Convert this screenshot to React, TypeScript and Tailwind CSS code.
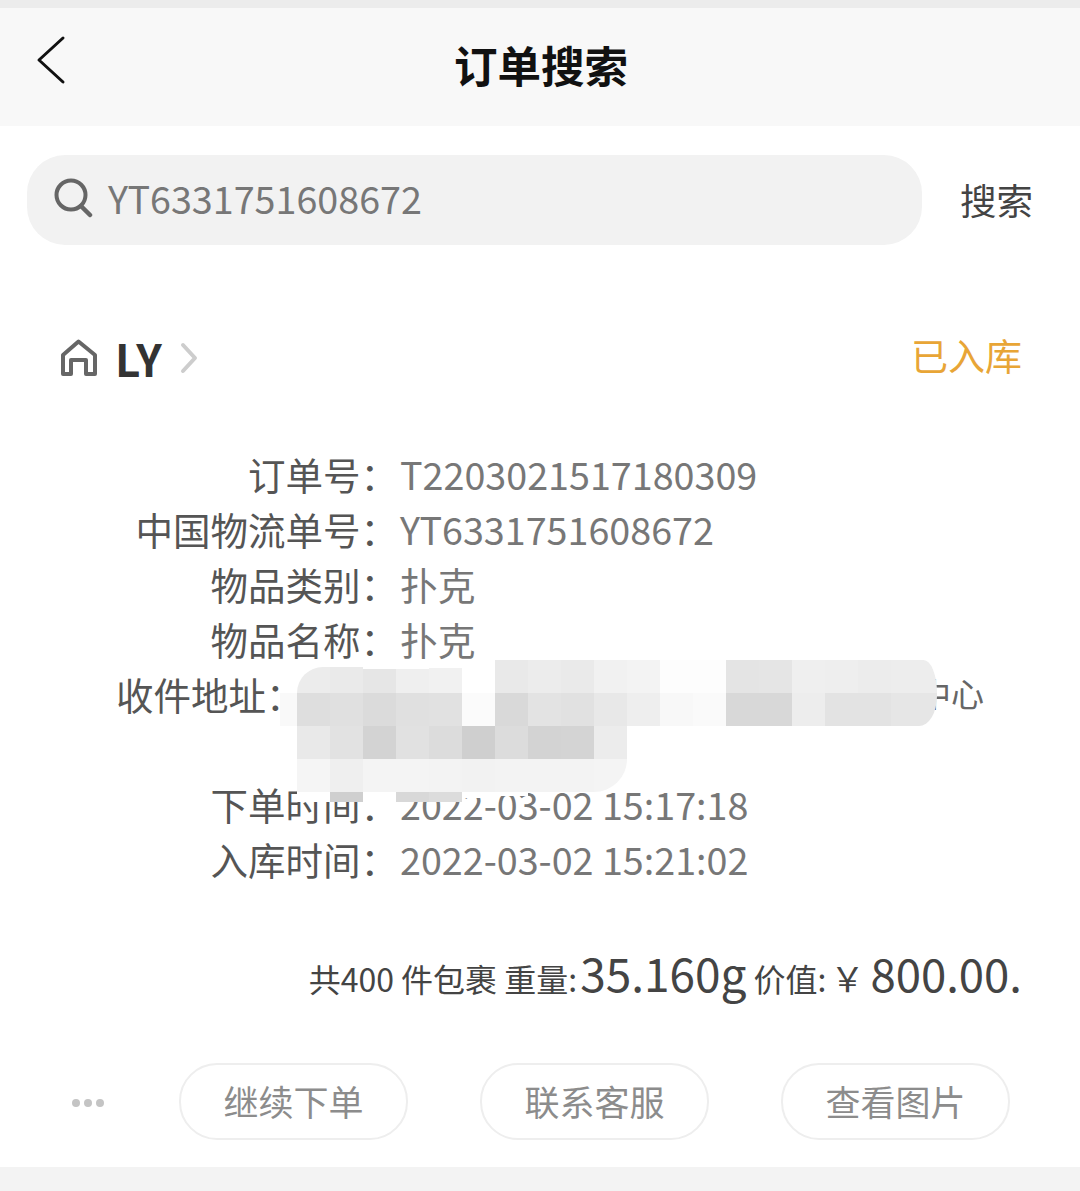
const labelRows = [
  { label: "订单号：", value: "T2203021517180309" },
  { label: "中国物流单号：", value: "YT6331751608672" },
  { label: "物品类别：", value: "扑克" },
  { label: "物品名称：", value: "扑克" },
];

const timeRows = [
  { label: "下单时间：", value: "2022-03-02 15:17:18" },
  { label: "入库时间：", value: "2022-03-02 15:21:02" },
];

// the blurred out part of the address, row by row, first track is the faint left edge
const mosaicTiles = [
  "",
  "bg-[#ececec] mt-[7px] rounded-tl-[30px]",
  "bg-[#eaeaea] mt-[7px]",
  "bg-[#e6e6e6] mt-[9px]",
  "bg-[#efefef] mt-[9px]",
  "bg-[#f1f1f1] mt-[8px]",
  "",
  "bg-[#e9e9e9]",
  "bg-[#ececec]",
  "bg-[#eaeaea]",
  "bg-[#f1f1f1]",
  "bg-[#f3f3f3]",
  "bg-[#fdfdfd]",
  "bg-[#fdfdfd]",
  "bg-[#e4e4e4]",
  "bg-[#e5e5e5]",
  "bg-[#efefef]",
  "bg-[#eeeeee]",
  "bg-[#ececec]",
  "bg-[#ededed] rounded-tr-[18px_44px]",

  "bg-[#f9f9f9]",
  "bg-[#dedede]",
  "bg-[#e0e0e0]",
  "bg-[#dbdbdb]",
  "bg-[#e0e0e0]",
  "bg-[#e1e1e1]",
  "bg-[#fbfbfb]",
  "bg-[#d9d9d9]",
  "bg-[#e3e3e3]",
  "bg-[#e1e1e1]",
  "bg-[#e8e8e8]",
  "bg-[#eeeeee]",
  "bg-[#f8f8f8]",
  "bg-[#fafafa]",
  "bg-[#d8d8d8]",
  "bg-[#d8d8d8]",
  "bg-[#ededed]",
  "bg-[#e3e3e3]",
  "bg-[#e3e3e3]",
  "bg-[#e6e6e6] rounded-br-[18px_30px]",

  "",
  "bg-[#e9e9e9]",
  "bg-[#e2e2e2]",
  "bg-[#d3d3d3]",
  "bg-[#e1e1e1]",
  "bg-[#dcdcdc]",
  "bg-[#cfcfcf]",
  "bg-[#dcdcdc]",
  "bg-[#d3d3d3]",
  "bg-[#d4d4d4]",
  "bg-[#ececec]",
  "", "", "", "", "", "", "", "", "",

  "",
  "bg-[#f5f5f5]",
  "bg-[#efefef]",
  "bg-[#f4f4f4]",
  "bg-[#f4f4f4]",
  "bg-[#f3f3f3]",
  "bg-[#f2f2f2]",
  "bg-[#f3f3f3]",
  "bg-[#f3f3f3]",
  "bg-[#f3f3f3]",
  "bg-[#f4f4f4] rounded-br-[40px]",
  "", "", "", "", "", "", "", "", "",

  "",
  "bg-white",
  "bg-[#cfcfcf]",
  "bg-white",
  "bg-[#d8d8d8]",
  "bg-[#dcdcdc]",
  "bg-white mb-[4px]",
  "bg-white mb-[6px]",
  "", "", "", "", "", "", "", "", "", "", "", "",
];

const actions = ["继续下单", "联系客服", "查看图片"];

export default function App() {
  return (
    <div className="relative flex h-[1191px] w-[1080px] flex-col overflow-hidden bg-white font-['Noto_Sans_CJK_SC','Noto_Sans',sans-serif]">
      <header className="flex h-[126px] shrink-0 items-center border-t-8 border-[#ececec] bg-[#f8f8f8]">
        <svg width="36" height="50" viewBox="0 0 36 50" fill="none" className="-mt-[14px] ml-[34px]">
          <path d="M29 3 L5 25 L29 47" stroke="#111" strokeWidth="3" strokeLinecap="round" strokeLinejoin="round" />
        </svg>
        <h1 className="mb-[4px] ml-[384px] text-[43.5px] leading-none font-bold text-[#111]">订单搜索</h1>
      </header>

      <div className="mt-[29px] flex items-center pl-[27px]">
        <div className="flex h-[90px] w-[895px] items-center rounded-[38px] bg-[#f2f2f2] pl-[27px]">
          <svg width="40" height="40" viewBox="0 0 40 40" fill="none" className="-mt-[4px]">
            <circle cx="17" cy="17" r="14.5" stroke="#666" strokeWidth="4" />
            <path d="M27 28 L36 37" stroke="#666" strokeWidth="4.5" strokeLinecap="round" />
          </svg>
          <span className="mb-[4px] ml-[14px] text-[37.7px] leading-none text-[#777]">YT6331751608672</span>
        </div>
        <span className="ml-[38px] text-[36.5px] leading-none text-[#444]">搜索</span>
      </div>

      <div className="mt-[83px] flex h-[60px] items-center justify-between pr-[58px] pl-[60px]">
        <div className="flex items-center">
          <svg width="38" height="38" viewBox="0 0 38 38" fill="none">
            <path
              d="M3 35 V16 L18.5 2.5 L35 16 V35 H26 V21 H11 V35 Z"
              stroke="#666"
              strokeWidth="4"
              strokeLinejoin="round"
            />
          </svg>
          <span className="ml-[17px] text-[44px] leading-none font-bold text-[#333]">LY</span>
          <svg width="20" height="32" viewBox="0 0 20 32" fill="none" className="ml-[17px]">
            <path d="M4 3 L16 16 L4 29" stroke="#cdcdcd" strokeWidth="4" strokeLinecap="round" strokeLinejoin="round" />
          </svg>
        </div>
        <span className="mb-[6px] text-[37px] leading-none text-[#e8a536]">已入库</span>
      </div>

      <div className="mt-[58px] flex flex-col text-[37.5px] leading-[55px]">
        {labelRows.map((row) => (
          <div key={row.label} className="grid h-[55px] grid-cols-[398px_1fr]">
            <span className="text-right whitespace-nowrap text-[#555]">{row.label}</span>
            <span className="pl-[2px] text-[37.7px] text-[#777]">{row.value}</span>
          </div>
        ))}
        <div className="flex h-[110px] pr-[96px] pl-[116px]">
          <span className="whitespace-nowrap text-[#555]">收件地址：</span>
          <span className="ml-auto text-[33px] text-[#666]">中心</span>
        </div>
        {timeRows.map((row) => (
          <div key={row.label} className="grid h-[55px] grid-cols-[398px_1fr]">
            <span className="text-right whitespace-nowrap text-[#555]">{row.label}</span>
            <span className="pl-[2px] text-[37.7px] text-[#777]">{row.value}</span>
          </div>
        ))}
      </div>

      <div className="mt-[63px] flex h-[64px] items-baseline justify-end pr-[58px] text-[#444]">
        <span className="text-[32px] leading-none">共400 件包裹 重量:</span>
        <span className="ml-[3px] text-[46px] leading-none">35.160g</span>
        <span className="ml-[7px] text-[32px] leading-none">价值:</span>
        <span className="ml-[4px] text-[34px] leading-none">{"\uFFE5"}</span>
        <span className="ml-[6px] text-[45.5px] leading-none">800.00.</span>
      </div>

      <div className="mt-[50px] flex items-center pl-[72px]">
        <div className="mt-[2px] flex w-[107px] gap-[4px]">
          <span className="h-[8px] w-[8px] rounded-full bg-[#c4c4c4]" />
          <span className="h-[8px] w-[8px] rounded-full bg-[#c4c4c4]" />
          <span className="h-[8px] w-[8px] rounded-full bg-[#c4c4c4]" />
        </div>
        <div className="flex gap-[72px]">
          {actions.map((action) => (
            <button
              key={action}
              className="h-[77px] w-[229px] rounded-[38px] border-2 border-[#eeeeee] pb-[2px] text-[35px] leading-none text-[#8c8c8c]"
            >
              {action}
            </button>
          ))}
        </div>
      </div>

      <div className="mt-auto h-[24px] bg-[#f3f3f3]" />

      <div className="absolute top-[660px] left-[280px] grid grid-cols-[17px_repeat(18,33px)_46px] grid-rows-[33px_33px_33px_33px_10px]">
        {mosaicTiles.map((tile, i) => (
          <div key={i} className={tile} />
        ))}
      </div>
    </div>
  );
}
